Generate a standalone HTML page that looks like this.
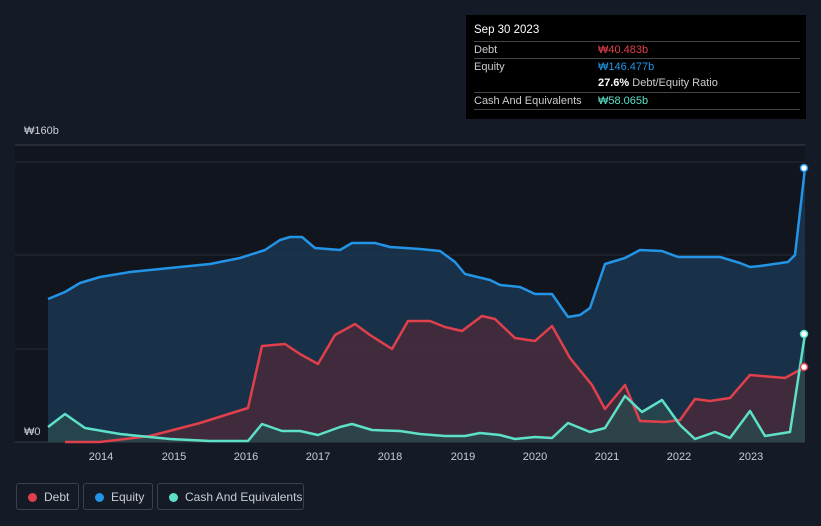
<!DOCTYPE html><html><head><style>
body{margin:0;width:821px;height:526px;background:#151b26;font-family:"Liberation Sans",sans-serif;overflow:hidden;position:relative}
.tt{position:absolute;left:466px;top:15px;width:340px;height:104px;background:#000;color:#ccc;font-size:11px}
.tt .r{position:absolute;left:8px;right:6px;border-top:1px solid #444;height:17px;line-height:17px}
.leg{position:absolute;top:483px;height:27px;border:1px solid #3a404c;border-radius:3px;color:#c9ccd2;font-size:12px;line-height:26px;box-sizing:border-box}
.leg i{position:absolute;left:11px;top:9px;width:9px;height:9px;border-radius:50%}
.leg span{position:absolute;left:27px}
</style></head><body>
<svg width="821" height="526" style="position:absolute;left:0;top:0">
<rect x="15" y="145" width="790" height="297" fill="#10151e"/>
<line x1="15" y1="145" x2="805" y2="145" stroke="#3a404b"/>
<line x1="15" y1="162" x2="805" y2="162" stroke="#262c37"/>
<line x1="15" y1="255" x2="805" y2="255" stroke="#262c37"/>
<line x1="15" y1="349" x2="805" y2="349" stroke="#262c37"/>
<line x1="15" y1="442" x2="805" y2="442" stroke="#3a404b"/>
<g font-size="11" fill="#c9ccd2"><text x="24" y="134">₩160b</text><text x="24" y="435">₩0</text>
<text x="101" y="460" text-anchor="middle">2014</text><text x="174" y="460" text-anchor="middle">2015</text><text x="246" y="460" text-anchor="middle">2016</text><text x="318" y="460" text-anchor="middle">2017</text><text x="390" y="460" text-anchor="middle">2018</text><text x="463" y="460" text-anchor="middle">2019</text><text x="535" y="460" text-anchor="middle">2020</text><text x="607" y="460" text-anchor="middle">2021</text><text x="679" y="460" text-anchor="middle">2022</text><text x="751" y="460" text-anchor="middle">2023</text></g>
<polygon fill="#1b3a57" fill-opacity="0.75" points="48,442 48,299 65,292 80,283 100,277 130,272 170,268 210,264 240,258 265,250 280,240 290,237 302,237 315,248 340,250 352,243 375,243 390,247 420,249 440,251 455,262 465,274 490,280 500,285 520,287 535,294 552,294 568,317 580,315 590,308 605,264 625,258 640,250 662,251 678,257 720,257 740,263 750,267 760,266 788,262 795,255 805,168 805,442"/>
<polygon fill="#4a2a3a" fill-opacity="0.8" points="65,442 100,442 150,436 200,423 235,412 248,408 262,346 285,344 300,354 318,364 335,335 355,324 370,335 392,349 408,321 430,321 445,327 462,331 482,316 495,319 515,338 535,341 552,326 570,358 592,385 605,409 625,385 640,421 665,422 680,420 695,399 710,401 730,398 750,375 785,378 805,367 805,442"/>
<polygon fill="#2b4a4c" fill-opacity="0.8" points="48,442 48,427 65,414 85,428 120,434 170,439 210,441 248,441 262,424 282,431 300,431 318,435 340,427 352,424 372,430 400,431 420,434 445,436 465,436 480,433 500,435 515,439 535,437 552,438 568,423 590,432 605,428 625,396 642,412 662,400 680,425 695,439 715,432 730,438 750,411 765,436 790,432 805,334 805,442"/>
<g fill="none" stroke-width="2.5" stroke-linejoin="round">
<polyline stroke="#2394e6" points="48,299 65,292 80,283 100,277 130,272 170,268 210,264 240,258 265,250 280,240 290,237 302,237 315,248 340,250 352,243 375,243 390,247 420,249 440,251 455,262 465,274 490,280 500,285 520,287 535,294 552,294 568,317 580,315 590,308 605,264 625,258 640,250 662,251 678,257 720,257 740,263 750,267 760,266 788,262 795,255 805,168"/>
<polyline stroke="#e0404c" points="65,442 100,442 150,436 200,423 235,412 248,408 262,346 285,344 300,354 318,364 335,335 355,324 370,335 392,349 408,321 430,321 445,327 462,331 482,316 495,319 515,338 535,341 552,326 570,358 592,385 605,409 625,385 640,421 665,422 680,420 695,399 710,401 730,398 750,375 785,378 805,367"/>
<polyline stroke="#5ee0c8" points="48,427 65,414 85,428 120,434 170,439 210,441 248,441 262,424 282,431 300,431 318,435 340,427 352,424 372,430 400,431 420,434 445,436 465,436 480,433 500,435 515,439 535,437 552,438 568,423 590,432 605,428 625,396 642,412 662,400 680,425 695,439 715,432 730,438 750,411 765,436 790,432 805,334"/>
</g>
<circle cx="804" cy="168" r="3.5" fill="#fff" stroke="#2394e6" stroke-width="1.5"/>
<circle cx="804" cy="334" r="3.5" fill="#fff" stroke="#5ee0c8" stroke-width="1.5"/>
<circle cx="804" cy="367" r="3.5" fill="#fff" stroke="#e0404c" stroke-width="1.5"/>
</svg>
<div class="tt">
<div style="position:absolute;left:8px;top:9px;color:#fff;font-size:11.5px">Sep 30 2023</div>
<div class="r" style="top:26px">Debt<b style="position:absolute;left:124px;color:#e0404c;font-weight:normal">₩40.483b</b></div>
<div class="r" style="top:43px">Equity<b style="position:absolute;left:124px;color:#2394e6;font-weight:normal">₩146.477b</b></div>
<div class="r" style="top:60px;border:none"><span style="position:absolute;left:124px;white-space:nowrap"><b style="color:#fff">27.6%</b> Debt/Equity Ratio</span></div>
<div class="r" style="top:77px">Cash And Equivalents<b style="position:absolute;left:124px;color:#5ee0c8;font-weight:normal">₩58.065b</b></div>
<div class="r" style="top:94px;height:0"></div>
</div>
<div class="leg" style="left:16px;width:63px"><i style="background:#e0404c"></i><span>Debt</span></div>
<div class="leg" style="left:83px;width:70px"><i style="background:#2394e6"></i><span>Equity</span></div>
<div class="leg" style="left:157px;width:147px"><i style="background:#5ee0c8"></i><span>Cash And Equivalents</span></div>
</body></html>
